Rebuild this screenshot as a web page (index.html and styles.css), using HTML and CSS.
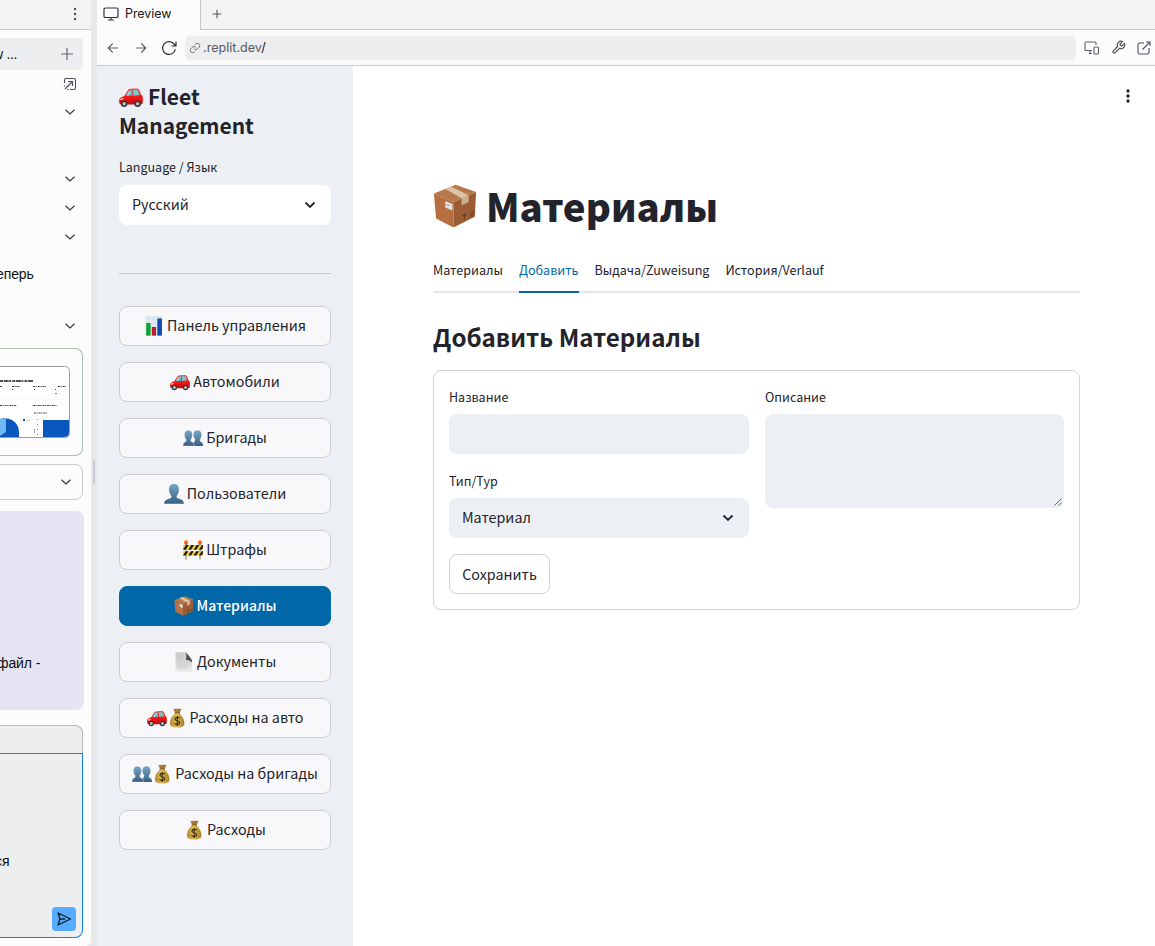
FILE: index.html
```html
<!DOCTYPE html>
<html lang="ru">
<head>
<meta charset="utf-8">
<title>Fleet Management</title>
<link rel="stylesheet" href="styles.css">
</head>
<body>
<svg class="defs" width="0" height="0" aria-hidden="true">
  <defs>
    <linearGradient id="gbust" x1="0" y1="0" x2="0" y2="1"><stop offset="0" stop-color="#7ba6c6"/><stop offset="1" stop-color="#355f84"/></linearGradient>
    <linearGradient id="gred" x1="0" y1="0" x2="0" y2="1"><stop offset="0" stop-color="#ff4a3d"/><stop offset=".6" stop-color="#f31414"/><stop offset="1" stop-color="#b80c10"/></linearGradient>
    <linearGradient id="gbag" x1="0" y1="0" x2="1" y2="0"><stop offset="0" stop-color="#b0852c"/><stop offset=".45" stop-color="#e2bd55"/><stop offset="1" stop-color="#a87a24"/></linearGradient>
    <linearGradient id="gdoc" x1="0" y1="0" x2="0" y2="1"><stop offset="0" stop-color="#c9c9c9"/><stop offset="1" stop-color="#ececec"/></linearGradient>
    <symbol id="car" viewBox="0 0 20 20">
      <path d="M.2 12.2C.4 10.8 2 9.9 4.2 9.3L7.300 4.500C7.800 3.700 8.500 3.300 9.600 3.200L14.500 3C15.900 3 16.700 3.500 17.200 4.800L18.300 8C19.400 8.700 19.900 9.800 19.900 11.300L19.700 15C19.600 15.800 19 16.200 18.200 16.200H2C.6 16.200 0 15.400 .2 12.200Z" fill="url(#gred)"/>
      <path d="M5.400 9L8.200 5C8.600 4.500 9 4.300 9.700 4.300H11.300L11 9Z" fill="#5fb4c2"/>
      <path d="M12 4.200H14.700C15.400 4.200 15.800 4.500 16 5.100L17 8.300L12 9Z" fill="#78c6cf"/>
      <path d="M6.200 8.500L8.500 5.300H10L8 8.700Z" fill="#a7dce0"/>
      <path d="M1 11.600C2 11 3 10.900 4 11.200L2.700 12.500H1Z" fill="#ffd9cf"/>
      <path d="M11.500 10V14.500M17.800 9.500L19 10.500" stroke="#b50d0d" stroke-width=".5" fill="none"/>
      <circle cx="4.300" cy="15.600" r="2.700" fill="#343434"/><circle cx="4.300" cy="15.600" r="1.500" fill="#b8b8b8"/>
      <circle cx="15.500" cy="15.600" r="2.700" fill="#343434"/><circle cx="15.500" cy="15.600" r="1.500" fill="#b8b8b8"/>
    </symbol>
    <symbol id="chart" viewBox="0 0 20 20">
      <rect x="1.600" y=".3" width="16.600" height="19.200" fill="#d9e5ee"/>
      <path d="M1.600 5H18M1.600 10H18M7.200 .3V19M12.700 .3V19" stroke="#eef4f8" stroke-width=".7"/>
      <rect x="2.200" y="7" width="4.400" height="12.600" fill="#0aa52d"/><rect x="7.800" y="11" width="4.300" height="8.600" fill="#bd1a2b"/><rect x="13.300" y="2.500" width="4.600" height="17.100" fill="#1149ae"/>
    </symbol>
    <symbol id="bust" viewBox="0 0 20 20">
      <path d="M10 0C13.700 0 15.300 2.700 15 6.200C14.800 8.800 13.600 10.800 12.500 12.200C12.500 14 13.500 14.300 15.800 15C18.600 15.900 19.800 17 19.900 19.700H.1C.2 17 1.400 15.900 4.200 15C6.500 14.300 7.500 14 7.500 12.200C6.400 10.800 5.200 8.800 5 6.200C4.700 2.700 6.300 0 10 0Z" fill="url(#gbust)"/>
    </symbol>
    <symbol id="busts" viewBox="0 0 20 20">
      <path d="M14.500 2.200C17.400 2.200 18.800 4.300 18.500 7.200C18.300 9.400 17.500 10.700 16.700 11.700C16.700 13.200 17.400 13.700 18.500 14.200C19.600 14.800 20 15.700 20 18H9L12.400 11.700C11 10 10.200 8 10.600 5.500C10.900 3.300 12.300 2.200 14.500 2.200Z" fill="url(#gbust)"/>
      <path d="M5.400 2.200C8.300 2.200 9.700 4.300 9.400 7.200C9.200 9.400 8.500 10.700 7.700 11.700C7.700 13.300 8.400 13.700 9.700 14.200C11 14.800 11.500 15.700 11.500 18H0C0 15.700 .5 14.800 1.700 14.200C2.700 13.700 3.300 13.200 3.300 11.700C2.400 10.700 1.600 9.300 1.400 7.200C1.200 4.300 2.600 2.200 5.400 2.200Z" fill="url(#gbust)" stroke="#f8f9fb" stroke-width=".35"/>
    </symbol>
    <symbol id="barrier" viewBox="0 0 20 20">
      <path d="M3 3V19.500M17 3V19.500" stroke="#a9a9a9" stroke-width="1.700"/>
      <circle cx="3" cy="2.300" r="2" fill="#ff6a1c"/><circle cx="17" cy="2.300" r="2" fill="#ff6a1c"/>
      <path d="M1.600 4H4.400M15.600 4H18.400" stroke="#8c4a1c"/>
      <path d="M0 5H20V9.800H0ZM0 11.200H20V15.500H0Z" fill="#f7cf24"/>
      <path d="M0 9.800L3 5H5.700L2.700 9.800ZM5.300 9.800L8.300 5H11L8 9.800ZM10.600 9.800L13.600 5H16.300L13.300 9.800ZM15.900 9.800L18.900 5H20V7.500L18.600 9.800ZM0 15.500L2.700 11.200H5.400L2.700 15.500ZM5.300 15.500L8 11.200H10.700L8 15.500ZM10.600 15.500L13.300 11.200H16L13.300 15.500ZM15.900 15.500L18.600 11.200H20V13.300L18.600 15.500Z" fill="#1d1b16"/>
    </symbol>
    <symbol id="box" viewBox="0 0 20 20">
      <path d="M.4 4.300L10.300 .3L19.600 3.600L9.300 8.200Z" fill="#b5784a"/>
      <path d="M.4 4.300L9.300 8.200V19.800L1.400 15.700Z" fill="#b76f42"/>
      <path d="M9.300 8.200L19.600 3.600L19 14.900L9.300 19.800Z" fill="#9c5c35"/>
      <path d="M5.500 2.200L8.200 1.100L16.200 5.100L13 6.500Z" fill="#dbc3a6"/>
      <path d="M13 6.500L16.200 5.100V8.300L13 9.700Z" fill="#cbb092"/>
      <path d="M5.600 7.700L8.800 9.100V12.100L5.600 10.700Z" fill="#e4e5e2"/><path d="M6.200 9.300L7.400 9.900" stroke="#8796a3" stroke-width=".5"/>
      <path d="M13.500 14.200C13.600 15.200 15 14.600 15 13.500ZM14.300 14.800V16.300M17.300 12.800V15M18.300 12.300V14.500" stroke="#693c21" stroke-width=".45" fill="#693c21"/>
    </symbol>
    <symbol id="doc" viewBox="0 0 20 20">
      <path d="M1.500 .3H11.500L18 8.500V19.700H1.500Z" fill="url(#gdoc)"/>
      <path d="M11.500 .3C12.800 3 12.500 5.500 11.700 8C14 7.700 16.500 8.500 18 10.500V8.200C16 5 14 2.500 11.500 .3Z" fill="#4f5356"/>
      <path d="M3 4H9M3 6H9M3 8H9M3 10H15M3 12H16M3 14H16M3 16H13" stroke="#bbb" stroke-width=".5"/>
    </symbol>
    <symbol id="bag" viewBox="0 0 20 20">
      <path d="M6.200 .8C7.500 1.500 8.300 .2 9.800 1C11.500 .2 12.500 1.500 14.600 .5L12.800 4.800H8Z" fill="#a87932"/>
      <path d="M7.800 5.200H12.700C14 7.500 17.400 10.200 17.400 14.700C17.400 18 15.800 19.400 10.200 19.400C4.600 19.400 3 18 3 14.700C3 10.200 6.500 7.500 7.800 5.200Z" fill="url(#gbag)"/>
      <path d="M7.700 4.900H12.900" stroke="#74501c" stroke-width="1.100"/>
      <path d="M12.700 10.300C12 9.100 8.200 8.800 8 10.900C7.800 13.300 12.900 12.100 12.700 14.700C12.500 17 8.500 16.800 7.500 15.300M10.200 8V18" stroke="#38300f" stroke-width="1.200" fill="none"/>
    </symbol>
    <symbol id="chev" viewBox="0 0 12 8"><path d="M1.500 1.800L6 6L10.500 1.800" fill="none" stroke="currentColor" stroke-width="1.200"/></symbol>
    <symbol id="chevb" viewBox="0 0 12 8"><path d="M1.500 1.500L6 5.900L10.500 1.500" fill="none" stroke="currentColor" stroke-width="1.800"/></symbol>
  </defs>
</svg>
<div class="app">
  <aside class="chat">
    <div class="chat-head"><svg width="4" height="14" viewBox="0 0 4 14"><g fill="#4b5058"><circle cx="2" cy="2" r="1.200"/><circle cx="2" cy="7" r="1.200"/><circle cx="2" cy="12" r="1.200"/></g></svg></div>
    <div class="chat-tab"><span>w ...</span><svg width="14" height="14" viewBox="0 0 14 14"><path d="M7 1V13M1 7H13" stroke="#62666d" stroke-width="1.200"/></svg></div>
    <div class="log">
      <svg class="pop" width="14" height="14" viewBox="0 0 14 14"><path d="M1.500 6V3Q1.500 1.500 3 1.500H11Q12.500 1.500 12.500 3V11Q12.500 12.500 11 12.500H7M5 4.500H9.500V9M9.500 4.500L2 12M1.500 8.500V9.500M4 12.500H5.500" fill="none" stroke="#4a4e58" stroke-width="1.100"/></svg>
      <svg class="c c1"><use href="#chev"/></svg>
      <svg class="c c2"><use href="#chev"/></svg>
      <svg class="c c3"><use href="#chev"/></svg>
      <svg class="c c3"><use href="#chev"/></svg>
      <p class="msg">еперь</p>
      <svg class="c c4"><use href="#chev"/></svg>
    </div>
    <div class="card">
      <svg class="thumb" width="70" height="72" viewBox="0 0 70 72">
        <path d="M0 .5H64.500Q69.500 .500 69.500 5.500V66.500Q69.500 71.500 64.500 71.500H0" fill="#fff" stroke="#9a9da2"/>
        <path d="M0 15H33" stroke="#17191f" stroke-width="1.700" stroke-dasharray="3 .7 5 .5 2 1"/>
        <path d="M0 20.500H2M12 20.500H20M33 20.500H46M58 20.500H66M12 23.500H13M34 23.500H35M55 23.500H56M0 39.500H17M33 39.500H57M34 47H47" stroke="#3c3e44" stroke-dasharray="2 .7 1 1"/>
        <path d="M55 27.500H57" stroke="#43a55a"/>
        <path d="M0 33.500H68" stroke="#f0f0f1" stroke-width=".5"/>
        <path d="M0 53Q6 51 12 54Q19 58 19 66V71H0Z" fill="#0757bd"/><path d="M0 53Q4 52 6 53V66L0 70Z" fill="#6ebaf5"/>
        <path d="M23 54H25" stroke="#0757bd" stroke-width="2"/><path d="M27 54.500H31" stroke="#aaa" stroke-dasharray="1 1"/>
        <path d="M37.500 53V70" stroke="#888" stroke-dasharray="1 4"/><path d="M34.500 63V67" stroke="#999"/>
        <path d="M43 54H69V67Q69 71 64 71H43Z" fill="#0757bd"/>
      </svg>
    </div>
    <div class="picker"><svg width="12" height="8"><use href="#chev"/></svg></div>
    <div class="bubble">файл -</div>
    <div class="composer">
      <div class="comp-head"></div>
      <div class="comp-body">
        <span>ся</span>
        <div class="send"><svg width="16" height="16" viewBox="0 0 16 16"><path d="M2 2L14.500 8L2 14L4 8ZM4 8H9" fill="none" stroke="#0c1b2b" stroke-width="1.300" stroke-linejoin="round"/></svg></div>
      </div>
    </div>
  </aside>
  <div class="gutter"><i></i></div>
  <section class="preview">
    <div class="tabs-bar">
      <div class="tab">
        <svg width="16" height="14" viewBox="0 0 16 14"><rect x="1" y="1" width="14" height="9.500" rx="1.300" fill="none" stroke="#30343b" stroke-width="1.200"/><path d="M8 10.500V13M5 13H11" stroke="#30343b" stroke-width="1.200"/></svg>
        <span>Preview</span>
      </div>
      <div class="plus"><svg width="10" height="10" viewBox="0 0 10 10"><path d="M5 .7V9.300M.7 5H9.300" stroke="#50545a" stroke-width="1.100"/></svg></div>
    </div>
    <div class="nav-bar">
      <svg class="back" width="12" height="12" viewBox="0 0 12 12"><path d="M11 6H1.500M5.700 1.500L1.200 6L5.700 10.500" fill="none" stroke="#5b5f66" stroke-width="1.100"/></svg>
      <svg class="fwd" width="12" height="12" viewBox="0 0 12 12"><path d="M1 6H10.500M6.300 1.500L10.800 6L6.300 10.500" fill="none" stroke="#5b5f66" stroke-width="1.100"/></svg>
      <svg class="reload" width="16" height="16" viewBox="0 0 16 16"><path d="M14.300 9.300A6.400 6.400 0 1 1 13 4L15 6M15 1.500V6H10.500" fill="none" stroke="#2a2e34" stroke-width="1.200"/></svg>
      <div class="url"><svg width="12" height="12" viewBox="0 0 24 24"><path d="M10 13a5 5 0 0 0 7.500.5l3-3a5 5 0 0 0-7-7l-1.700 1.700M14 11a5 5 0 0 0-7.500-.5l-3 3a5 5 0 0 0 7 7l1.700-1.700" fill="none" stroke="#71757b" stroke-width="2"/></svg><span>.replit.dev<b>/</b></span></div>
      <svg class="t1" width="16" height="14" viewBox="0 0 16 14"><path d="M8 9.500H2Q1 9.500 1 8.500V2Q1 1 2 1H11Q12 1 12 2V4M5 12.500H8M6 9.500V12.500" fill="none" stroke="#5a5e65" stroke-width="1.100"/><rect x="10" y="6" width="4.500" height="7" rx="1" fill="none" stroke="#5a5e65" stroke-width="1.100"/></svg>
      <svg class="t2" width="15" height="15" viewBox="0 0 24 24"><path d="M14.700 6.300a1 1 0 0 0 0 1.400l1.600 1.600a1 1 0 0 0 1.400 0l3.800-3.800a6 6 0 0 1-7.900 7.900l-6.900 6.900a2.100 2.100 0 0 1-3-3l6.900-6.900a6 6 0 0 1 7.900-7.900z" fill="none" stroke="#4a4e57" stroke-width="1.900"/></svg>
      <svg class="t3" width="14" height="14" viewBox="0 0 14 14"><path d="M7 2H2.500Q1 2 1 3.500V11.500Q1 13 2.500 13H10.500Q12 13 12 11.500V7M9 1H13V5M13 1L5.500 8.500" fill="none" stroke="#4f535b" stroke-width="1.100"/></svg>
    </div>
    <div class="site">
      <aside class="side">
        <h2 class="brand"><svg width="24" height="24"><use href="#car"/></svg><span class="b1">Fleet</span><br><span class="b2">Management</span></h2>
        <div class="lab lang">Language / Язык</div>
        <div class="select white"><span>Русский</span><svg width="12" height="8"><use href="#chevb"/></svg></div>
        <hr>
        <nav>
          <button><svg><use href="#chart"/></svg><span>Панель управления</span></button>
          <button><svg><use href="#car"/></svg><span>Автомобили</span></button>
          <button><svg><use href="#busts"/></svg><span>Бригады</span></button>
          <button><svg><use href="#bust"/></svg><span>Пользователи</span></button>
          <button><svg><use href="#barrier"/></svg><span>Штрафы</span></button>
          <button class="on"><svg><use href="#box"/></svg><span>Материалы</span></button>
          <button><svg><use href="#doc"/></svg><span>Документы</span></button>
          <button><svg><use href="#car"/></svg><svg><use href="#bag"/></svg><span>Расходы на авто</span></button>
          <button><svg><use href="#busts"/></svg><svg><use href="#bag"/></svg><span>Расходы на бригады</span></button>
          <button><svg><use href="#bag"/></svg><span>Расходы</span></button>
        </nav>
      </aside>
      <main>
        <div class="menu"><svg width="4" height="14" viewBox="0 0 4 14"><g fill="#262730"><circle cx="2" cy="2" r="1.700"/><circle cx="2" cy="7" r="1.700"/><circle cx="2" cy="12" r="1.700"/></g></svg></div>
        <h1><svg width="44" height="44"><use href="#box"/></svg><span>Материалы</span></h1>
        <div class="tabs"><span>Материалы</span><span class="sel">Добавить</span><span>Выдача/Zuweisung</span><span>История/Verlauf</span></div>
        <h2 class="sub">Добавить Материалы</h2>
        <form class="form">
          <div class="col">
            <div class="lab">Название</div>
            <div class="field"></div>
            <div class="lab second">Тип/Typ</div>
            <div class="select"><span>Материал</span><svg width="12" height="8"><use href="#chevb"/></svg></div>
            <button type="button" class="save">Сохранить</button>
          </div>
          <div class="col">
            <div class="lab">Описание</div>
            <div class="area"><svg width="8" height="8" viewBox="0 0 8 8"><path d="M.5 7.500L7.500 .5M4.500 7.500L7.500 4.500" stroke="#555" stroke-width=".9"/></svg></div>
          </div>
        </form>
      </main>
    </div>
  </section>
</div>
</body>
</html>
```
FILE: styles.css
```css
* { box-sizing: border-box; }
body { margin: 0; width: 1155px; height: 946px; overflow: hidden; background: #fff; font-family: "Noto Sans CJK SC", "Noto Sans", sans-serif; color: #22232b; }
svg { display: block; flex: none; }
.defs { position: absolute; }
h1, h2, p { margin: 0; }
.app { display: flex; height: 946px; background: #e6e8ea; }

.chat { width: 91px; background: #fcfcfc; border-bottom-right-radius: 6px; font-family: "Liberation Sans", Arial, sans-serif; font-size: 14px; color: #0c0e12; overflow: hidden; }
.chat-head { height: 30px; background: #f3f3f3; border-bottom: 1px solid #c6c9cc; padding: 7px 0 0 73px; }
.chat-tab { margin-top: 8px; width: 83px; height: 32px; background: #edeef0; border-radius: 0 4px 4px 0; display: flex; justify-content: space-between; align-items: center; padding-right: 9px; }
.chat-tab span { margin-left: -7px; letter-spacing: -.3px; }
.log { height: 278px; padding: 7px 0 0 63px; }
.c { width: 12px; height: 8px; margin-left: 1px; color: #343843; }
.c1 { margin-top: 17px; }
.c2 { margin-top: 59px; }
.c3 { margin-top: 21px; }
.c4 { margin-top: 40px; }
.msg { margin: 25px 0 0 -67px; height: 16px; line-height: 16px; letter-spacing: -.1px; }
.card { width: 83px; height: 108px; border: 1px solid #a3bfad; border-left: 0; border-radius: 0 8px 8px 0; padding-top: 17px; }
.picker { width: 83px; height: 36px; margin-top: 8px; border: 1px solid #cbcdd0; border-left: 0; border-radius: 0 8px 8px 0; padding: 13px 0 0 60px; color: #343843; }
.bubble { width: 84px; height: 199px; margin-top: 11px; background: #e5e4f3; border-radius: 0 8px 8px 0; padding-top: 144px; line-height: 16px; white-space: nowrap; text-indent: -3px; letter-spacing: -.1px; }
.composer { width: 83px; height: 213px; margin-top: 15px; background: #edeef0; border-radius: 0 8px 8px 0; }
.comp-head { height: 28px; border: 1px solid #b7babd; border-width: 1px 1px 0 0; border-radius: 0 8px 0 0; }
.comp-body { height: 185px; border: 1px solid #0f7ff0; border-left: 0; border-radius: 0 0 8px 0; padding: 99px 0 0; line-height: 16px; }
.comp-body span { display: block; margin-left: -5px; }
.send { width: 24px; height: 24px; margin: 38px 0 0 52px; background: #57abff; border-radius: 4px; padding: 4px; }

.gutter { width: 6px; padding: 460px 0 0 2px; }
.gutter i { display: block; width: 2px; height: 24px; border-radius: 1px; background: #c6c9cd; }

.preview { width: 1058px; background: #fff; }
.tabs-bar { height: 30px; display: flex; background: #f3f3f3; font-family: Inter, sans-serif; }
.tab { width: 104px; background: #fcfcfc; border-right: 1px solid #c6c9cc; display: flex; align-items: flex-start; padding: 7px 0 0 6px; gap: 6px; font-size: 12.400px; line-height: 14px; color: #15171c; }
.plus { flex: 1; border-bottom: 1px solid #c6c9cc; padding: 9px 0 0 11px; }
.nav-bar { height: 36px; background: #fcfcfc; border-bottom: 1px solid #c6c9cc; display: flex; align-items: center; padding-left: 10px; }
.fwd { margin-left: 16px; }
.reload { margin-left: 14px; }
.url { margin-left: 8px; width: 891px; height: 24px; background: #edeef0; border-radius: 5px; display: flex; align-items: center; gap: 2px; padding-left: 4px; font-family: Inter, sans-serif; font-size: 12.600px; color: #565a61; }
.url b { font-weight: 400; color: #111; }
.t1 { margin-left: 8px; }
.t2 { margin-left: 11px; }
.t3 { margin-left: 11px; }
.site { display: flex; height: 880px; }

.side { width: 256px; background: #ecf0f5; padding: 16px 22px 0; }
.brand { font-size: 20.950px; line-height: 29px; font-weight: 700; height: 58px; white-space: nowrap; }
.brand svg { display: inline-block; vertical-align: -4px; }
.b1 { margin-left: 5px; }
.lab { font-size: 12.500px; line-height: 20px; height: 20px; white-space: nowrap; }
.lang { margin-top: 17px; }
.select { height: 40px; border-radius: 8px; background: #ecf0f5; display: flex; align-items: center; justify-content: space-between; padding: 0 15px 0 13px; font-size: 14.300px; line-height: 20px; }
.select span { margin-top: -2px; }
.white { background: #fff; margin-top: 8px; }
.side hr { border: 0; height: 1px; background: #c5c8cd; margin: 48px 0 32px; }
.side nav { display: grid; gap: 16px; }
.side nav button { height: 40px; padding: 0; border: 1px solid #cbcccf; border-radius: 8px; background: #f8f8fb; display: flex; align-items: center; justify-content: center; font-family: inherit; font-size: 14.350px; color: inherit; white-space: nowrap; }
.side nav svg { width: 20px; height: 20px; margin-top: -1px; }
.side nav span { margin-left: 3px; line-height: 20px; margin-top: -2px; }
.side nav .on { background: #0068a9; border-color: #0068a9; color: #fff; font-size: 14px; font-weight: 500; }

main { width: 802px; padding: 0 75px 0 80px; }
.menu { height: 115px; padding: 23px 0 0 613px; }
.menu svg { margin-left: 80px; }
h1 { height: 60px; display: flex; align-items: center; font-size: 38.300px; font-weight: 900; line-height: 56px; white-space: nowrap; }
h1 svg { margin-top: -11px; }
h1 span { margin: -10px 0 0 9px; }
.tabs { height: 42px; margin-top: 10px; border-bottom: 2px solid #e6e7e9; display: flex; gap: 16px; font-size: 12.550px; line-height: 38px; white-space: nowrap; }
.sel { height: 42px; color: #0068a9; border-bottom: 2px solid #0068a9; }
.sub { height: 36px; margin-top: 26px; line-height: 36px; font-size: 24.150px; white-space: nowrap; }
.form { width: 647px; height: 240px; margin-top: 15px; padding: 16px 15px; border: 1px solid #d2d3d6; border-radius: 8px; display: grid; grid-template-columns: 300px 299px; gap: 16px; }
.form .lab { margin-bottom: 7px; }
.field { height: 40px; border-radius: 8px; background: #ecf0f5; }
.form .second { margin-top: 17px; }
.save { display: block; width: 101px; height: 40px; margin-top: 16px; padding: 0 0 2px; border: 1px solid #d0d1d4; border-radius: 8px; background: #fff; font-family: inherit; font-size: 14.300px; color: inherit; }
.area { height: 94px; border-radius: 8px; background: #ecf0f5; display: flex; justify-content: flex-end; align-items: flex-end; padding: 0 2px 2px 0; }
```
